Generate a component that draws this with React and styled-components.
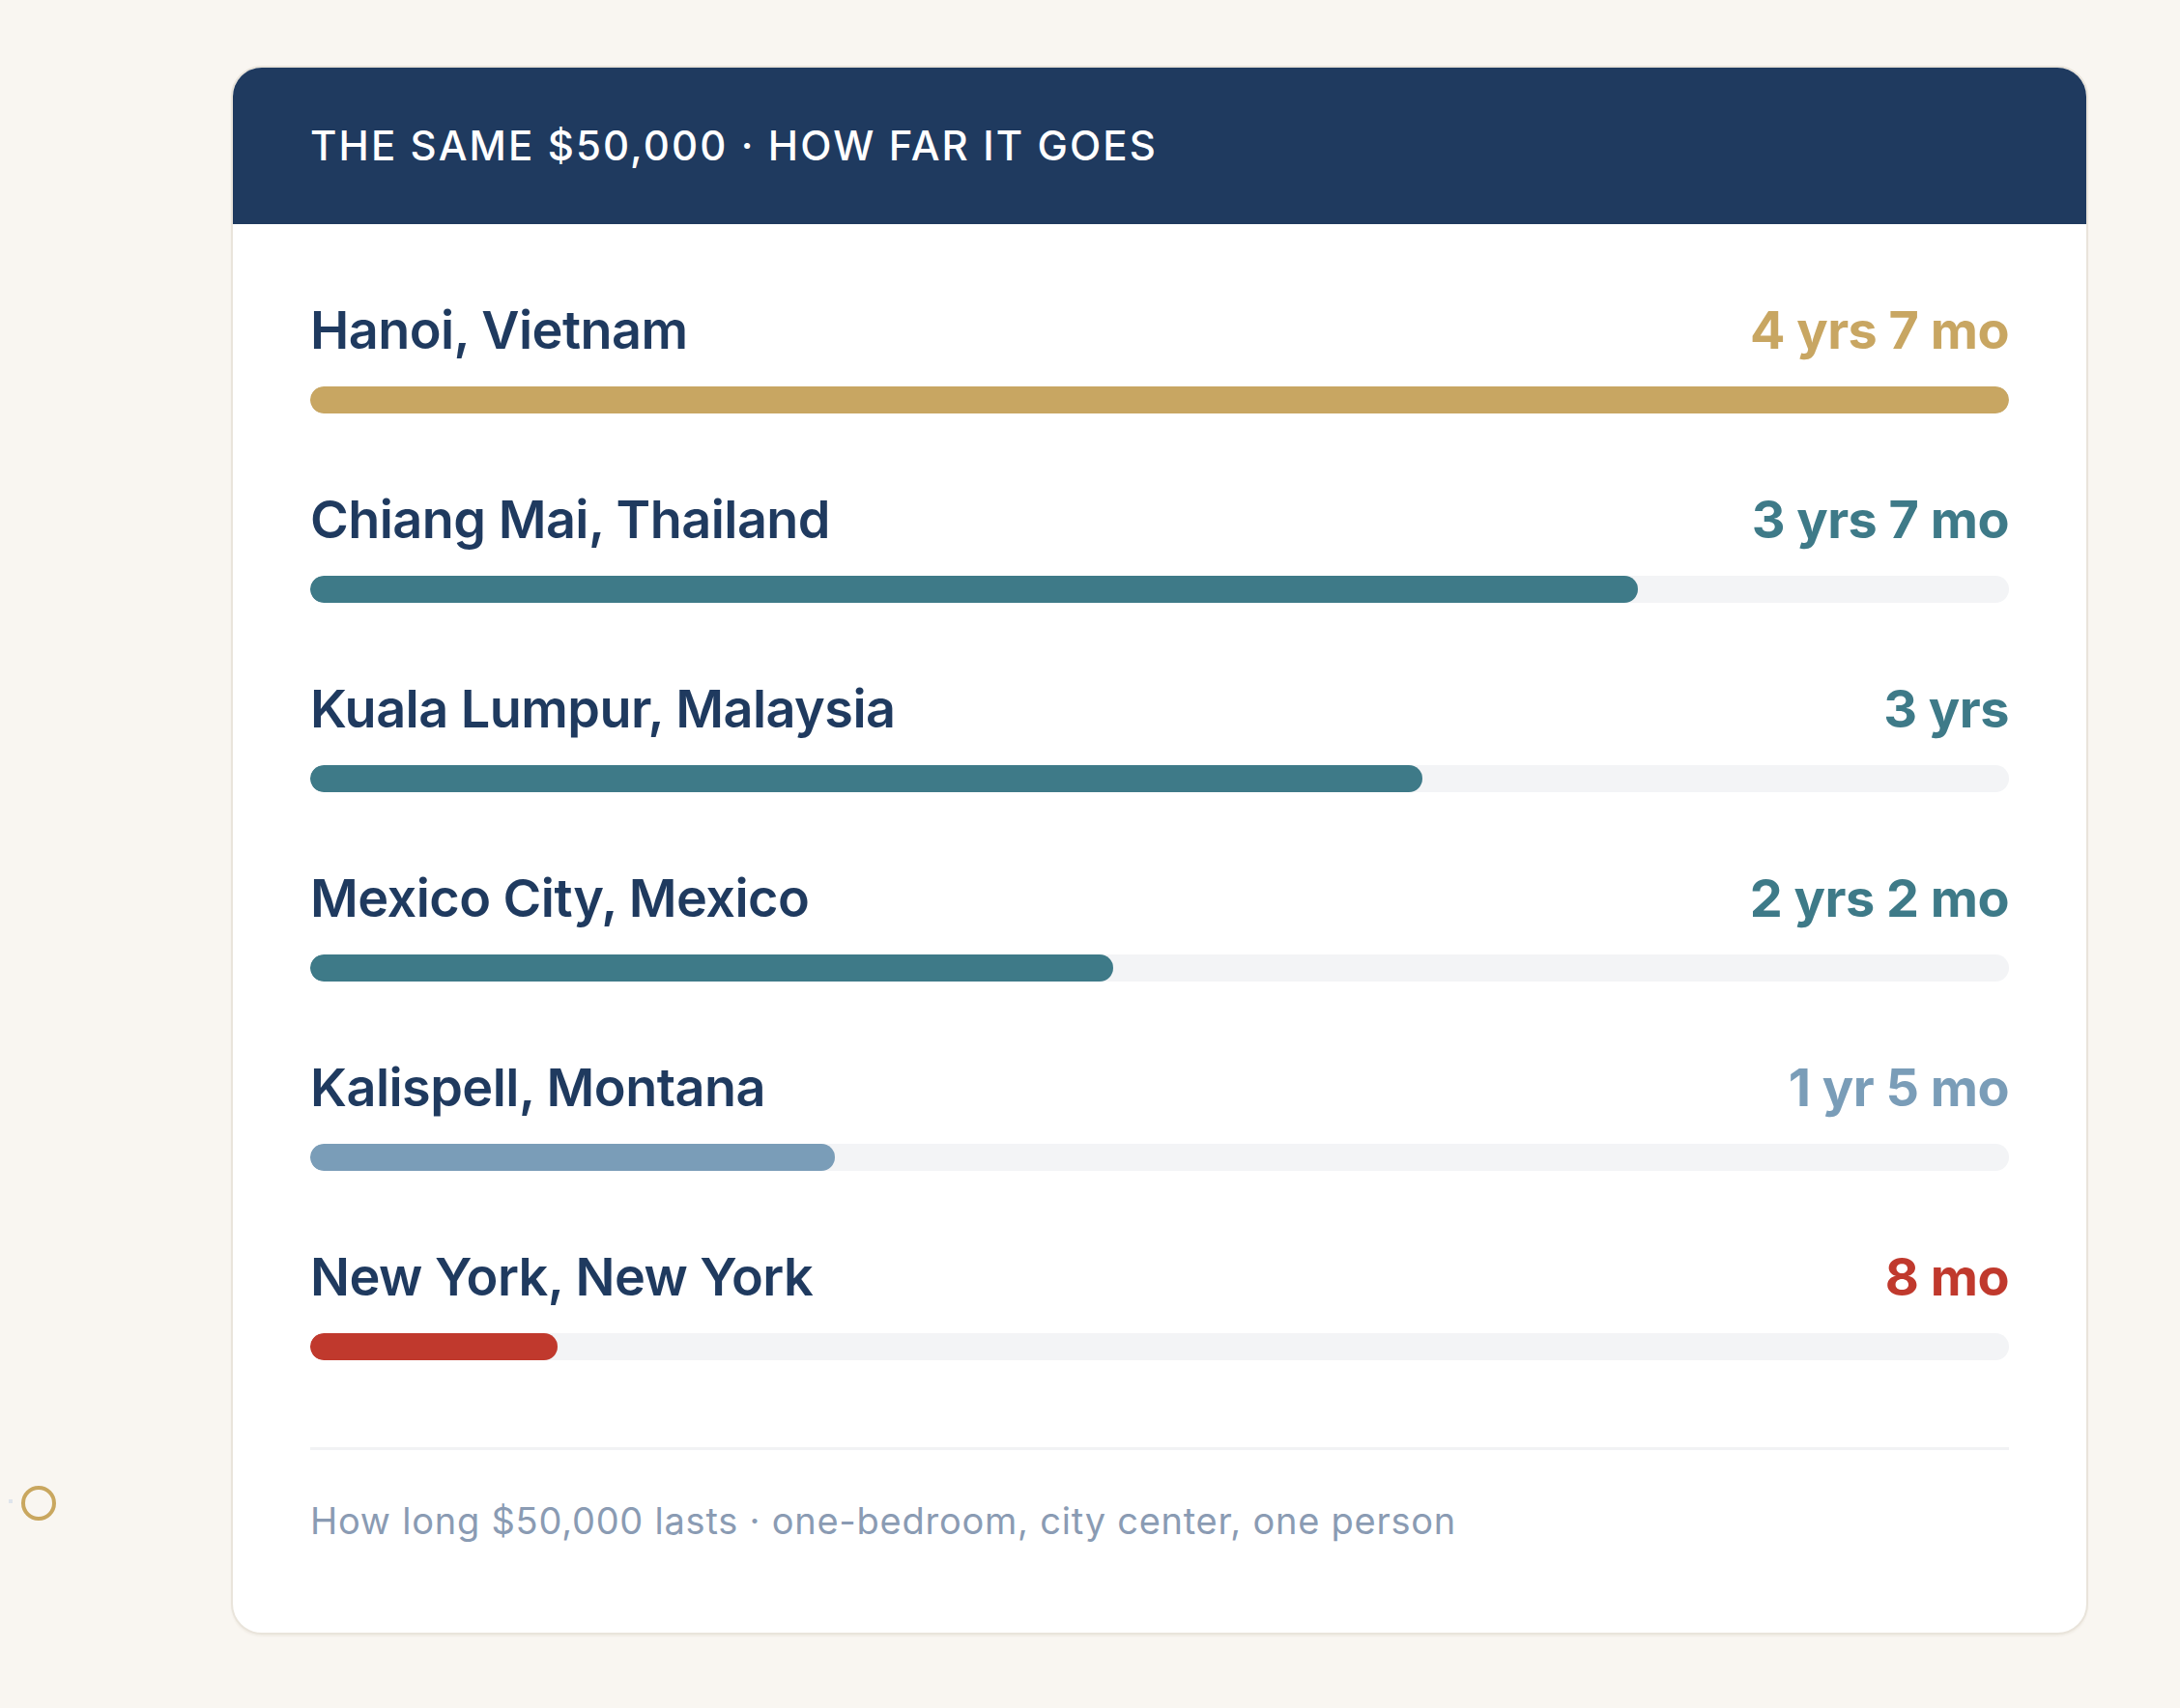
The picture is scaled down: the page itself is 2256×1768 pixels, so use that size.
import { styled, createGlobalStyle } from "styled-components";

const GlobalStyle = createGlobalStyle`
  html, body {
    margin: 0;
    padding: 0;
    background: #f9f6f1;
  }
  body {
    font-family: Inter, "Noto Sans", sans-serif;
    -webkit-font-smoothing: antialiased;
  }
`;

const cities = [
  { name: "Hanoi, Vietnam", months: 55, color: "#c8a662" },
  { name: "Chiang Mai, Thailand", months: 43, color: "#3e7a88" },
  { name: "Kuala Lumpur, Malaysia", months: 36, color: "#3e7a88" },
  { name: "Mexico City, Mexico", months: 26, color: "#3e7a88" },
  { name: "Kalispell, Montana", months: 17, color: "#7a9db8" },
  { name: "New York, New York", months: 8, color: "#c0392d" },
];

const formatDuration = (months) => {
  const yrs = Math.floor(months / 12);
  const mo = months % 12;
  const parts = [];
  if (yrs > 0) parts.push(`${yrs} ${yrs === 1 ? "yr" : "yrs"}`);
  if (mo > 0) parts.push(`${mo} mo`);
  return parts.join(" ");
};

const App = () => {
  const max = Math.max(...cities.map((c) => c.months));

  return (
    <Page>
      <GlobalStyle />
      <Marker />
      <Dot />
      <Card>
        <Header>
          <Title>The same $50,000 · how far it goes</Title>
        </Header>
        <Body>
          <Rows>
            {cities.map((city) => (
              <Row key={city.name}>
                <RowHead>
                  <CityName>{city.name}</CityName>
                  <Duration $color={city.color}>
                    {formatDuration(city.months)}
                  </Duration>
                </RowHead>
                <Track>
                  <Fill
                    $color={city.color}
                    style={{ width: `${(city.months / max) * 100}%` }}
                  />
                </Track>
              </Row>
            ))}
          </Rows>
          <Footnote>
            How long $50,000 lasts · one-bedroom, city center, one person
          </Footnote>
        </Body>
      </Card>
    </Page>
  );
};

const Page = styled.div`
  position: relative;
  min-height: 1768px;
  box-sizing: border-box;
  padding: 68px 95px 0 239px;
`;

const Marker = styled.div`
  position: absolute;
  left: 22px;
  top: 1538px;
  width: 36px;
  height: 36px;
  box-sizing: border-box;
  border: 4px solid #c9a75f;
  border-radius: 50%;
`;

const Dot = styled.div`
  position: absolute;
  left: 9px;
  top: 1552px;
  width: 4px;
  height: 4px;
  background: #dfe5ec;
`;

const Card = styled.div`
  background: #ffffff;
  border: 2px solid #e9e4db;
  border-radius: 32px;
  overflow: hidden;
  box-shadow: 0 2px 2px rgba(120, 100, 70, 0.06);
`;

const Header = styled.div`
  display: flex;
  align-items: center;
  height: 162px;
  padding: 0 80px;
  background: #1f3a5f;
`;

const Title = styled.h2`
  margin: 0;
  color: #ffffff;
  font-size: 42px;
  font-weight: 500;
  letter-spacing: 0.05em;
  text-transform: uppercase;
  line-height: 1;
`;

const Body = styled.div`
  padding: 77px 80px 93px;
`;

const Rows = styled.div`
  display: flex;
  flex-direction: column;
  gap: 77px;
  padding-bottom: 90px;
  border-bottom: 3px solid #f1f2f4;
`;

const Row = styled.div`
  display: flex;
  flex-direction: column;
  gap: 25px;
`;

const RowHead = styled.div`
  display: flex;
  justify-content: space-between;
  align-items: baseline;
  line-height: 66px;
`;

const CityName = styled.span`
  color: #1f3a5f;
  font-size: 54px;
  font-weight: 600;
  letter-spacing: -0.01em;
`;

const Duration = styled.span`
  color: ${(p) => p.$color};
  font-size: 54px;
  font-weight: 700;
  letter-spacing: -0.01em;
`;

const Track = styled.div`
  height: 28px;
  border-radius: 14px;
  background: #f3f4f6;
  overflow: hidden;
`;

const Fill = styled.div`
  height: 100%;
  border-radius: 14px;
  background: ${(p) => p.$color};
`;

const Footnote = styled.p`
  margin: 50px 0 0;
  color: #8a9bb3;
  font-size: 38px;
  line-height: 46px;
  font-weight: 400;
  letter-spacing: 0.02em;
`;

export default App;
